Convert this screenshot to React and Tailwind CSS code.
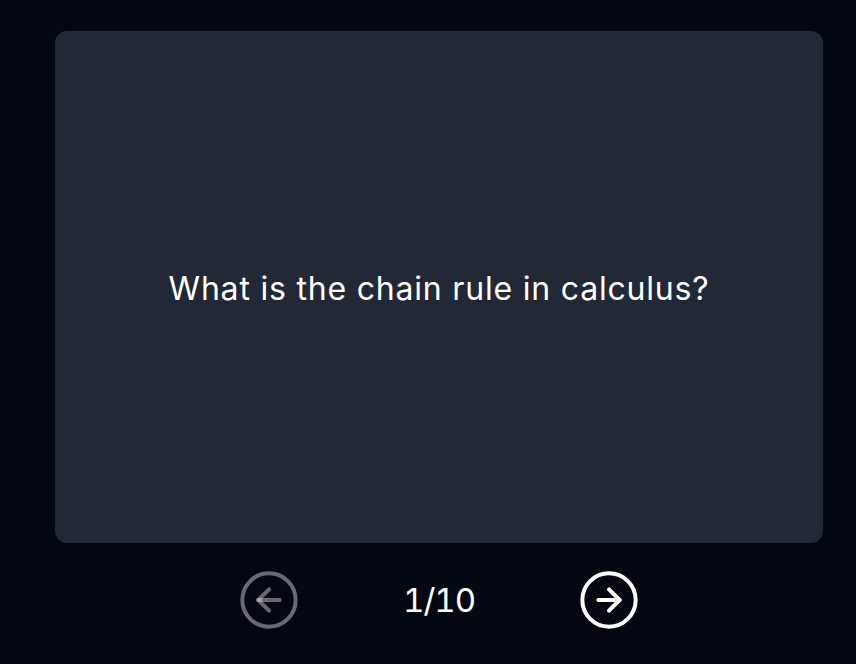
import React, { useState } from 'react'
import { CircleArrowLeft, CircleArrowRight } from 'lucide-react'

const cards = [
    { q: 'What is the chain rule in calculus?' },
    { q: 'What is a derivative?' },
    { q: 'What is an integral?' },
    { q: 'What is a limit?' },
    { q: 'What is the product rule?' },
    { q: 'What is the quotient rule?' },
    { q: 'What is a Taylor series?' },
    { q: 'What is the fundamental theorem of calculus?' },
    { q: 'What is implicit differentiation?' },
    { q: 'What is a partial derivative?' },
]

const App = () => {
    const [index, setIndex] = useState(0)
    const total = cards.length

    return (
        <div
            className="min-h-[664px] w-full bg-[#030712] text-white flex flex-col items-center pt-[31px] pl-[22px] gap-[25px]"
            style={{ fontFamily: 'Inter, "Noto Sans", sans-serif' }}>
            <div className="w-[768px] h-[512px] rounded-xl bg-[#222835] flex items-center justify-center px-10">
                <p className="text-[32px] leading-tight tracking-[0.025em] text-center mt-[3px]">
                    {cards[index].q}
                </p>
            </div>
            <div className="flex items-center gap-[102px]">
                <button
                    disabled={index === 0}
                    onClick={() => setIndex(i => Math.max(0, i - 1))}
                    className={index === 0 ? 'text-white/40' : 'text-white'}>
                    <CircleArrowLeft size={64} strokeWidth={1.5} />
                </button>
                <span className="text-[33px] leading-none tabular-nums tracking-[-0.03em] w-[72px] text-center">
                    {index + 1}/{total}
                </span>
                <button
                    disabled={index === total - 1}
                    onClick={() => setIndex(i => Math.min(total - 1, i + 1))}
                    className={
                        index === total - 1 ? 'text-white/40' : 'text-white'
                    }>
                    <CircleArrowRight size={64} strokeWidth={1.5} />
                </button>
            </div>
        </div>
    )
}

export default App
